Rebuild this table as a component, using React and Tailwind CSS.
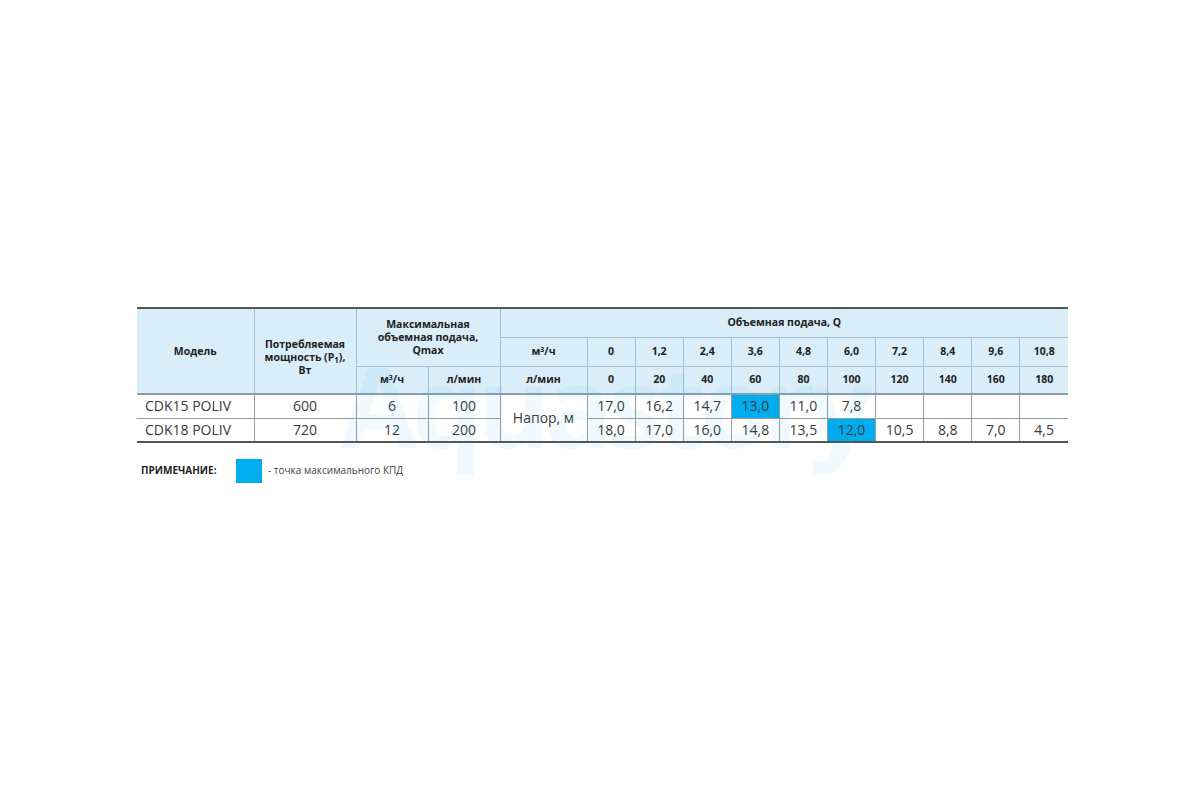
import React from 'react';

const flowM3 = ['0', '1,2', '2,4', '3,6', '4,8', '6,0', '7,2', '8,4', '9,6', '10,8'];
const flowL = ['0', '20', '40', '60', '80', '100', '120', '140', '160', '180'];

const models = [
  { name: 'CDK15 POLIV', power: '600', m3: '6', lmin: '100', head: ['17,0', '16,2', '14,7', '13,0', '11,0', '7,8', '', '', '', ''], best: 3 },
  { name: 'CDK18 POLIV', power: '720', m3: '12', lmin: '200', head: ['18,0', '17,0', '16,0', '14,8', '13,5', '12,0', '10,5', '8,8', '7,0', '4,5'], best: 5 }
];

const th = 'border border-[#a9bfcc] bg-[#d9eef9] text-center align-middle text-[10.5px] font-bold leading-[13px] text-[#222]';
const td = 'border border-[#9c9c9c] text-center align-middle text-[14px] leading-[22px] text-[#3a3a3a]';

function App() {
  return (
    <div className="min-h-[800px] w-[1200px] bg-white pl-[137px] pt-[307px]" style={{ fontFamily: '"Open Sans", "Noto Sans", sans-serif' }}>
      <div className="relative w-[931px]">
        <table className="w-[931px] table-fixed border-collapse border-t-2 border-b-2 border-t-[#555] border-b-[#555]">
          <colgroup>
            <col className="w-[117px]" />
            <col className="w-[102px]" />
            <col className="w-[72px]" />
            <col className="w-[72px]" />
            <col className="w-[87px]" />
            {flowM3.map((v) => (
              <col key={v} className="w-[48.1px]" />
            ))}
          </colgroup>
          <thead>
            <tr className="h-[29px]">
              <th rowSpan={3} className={`${th} border-l-0 border-t-0`}>Модель</th>
              <th rowSpan={3} className={`${th} border-t-0 pt-[12px]`}>
                Потребляемая
                <br />
                мощность (P<sub className="text-[8px]">1</sub>),
                <br />
                Вт
              </th>
              <th rowSpan={2} colSpan={2} className={`${th} border-t-0`}>
                Максимальная
                <br />
                объемная подача,
                <br />
                Qmax
              </th>
              <th colSpan={11} className={`${th} border-r-0 border-t-0`}>Объемная подача, Q</th>
            </tr>
            <tr className="h-[29px]">
              <th className={th}>
                м<sup className="text-[7px]">3</sup>/ч
              </th>
              {flowM3.map((v, i) => (
                <th key={v} className={`${th} ${i === flowM3.length - 1 ? 'border-r-0' : ''}`}>{v}</th>
              ))}
            </tr>
            <tr className="h-[28px] border-b-2 border-b-[#8d9ea8]">
              <th className={th}>
                м<sup className="text-[7px]">3</sup>/ч
              </th>
              <th className={th}>л/мин</th>
              <th className={th}>л/мин</th>
              {flowL.map((v, i) => (
                <th key={v} className={`${th} ${i === flowL.length - 1 ? 'border-r-0' : ''}`}>{v}</th>
              ))}
            </tr>
          </thead>
          <tbody>
            {models.map((m, r) => (
              <tr key={m.name} className={r === 0 ? 'h-[24px]' : 'h-[23px]'}>
                <td className={`${td} border-l-0 pl-[8px] text-left`}>{m.name}</td>
                <td className={td}>{m.power}</td>
                <td className={td}>{m.m3}</td>
                <td className={td}>{m.lmin}</td>
                {r === 0 && (
                  <td rowSpan={2} className={td}>
                    Напор, м
                  </td>
                )}
                {m.head.map((h, i) => (
                  <td
                    key={i}
                    className={`${td} ${i === m.head.length - 1 ? 'border-r-0' : ''} ${i === m.best ? 'bg-[#00aeef] text-[#1d5a7a]' : ''}`}
                  >
                    {h}
                  </td>
                ))}
              </tr>
            ))}
          </tbody>
        </table>
        {/* watermark */}
        <div
          aria-hidden="true"
          className="pointer-events-none absolute left-[203px] top-[42px] select-none text-[112px] font-bold leading-none tracking-[-0.05em] text-[#0096dc]/[0.06]"
        >
          Aquastory
        </div>
      </div>

      <div className="mt-[16px] flex items-center pl-[4px]">
        <span className="w-[95px] text-[10px] font-bold text-[#222]">ПРИМЕЧАНИЕ:</span>
        <span className="h-[24px] w-[26px] bg-[#00aeef]" />
        <span className="ml-[6px] text-[10px] text-[#444]">- точка максимального КПД</span>
      </div>
    </div>
  );
}

export default App;
